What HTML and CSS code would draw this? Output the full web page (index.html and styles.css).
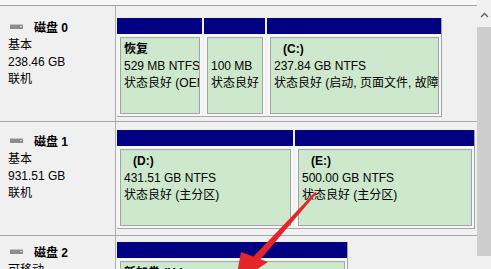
FILE: index.html
```html
<!DOCTYPE html>
<html lang="zh-CN">
<head>
    <meta charset="UTF-8">
    <title>磁盘管理</title>
    <link rel="stylesheet" href="styles.css">
</head>
<body>
<div class="screen">
    <div class="volumes">
        <div class="top-strip"></div>

        <div class="disk disk-0">
            <div class="disk-info">
                <div class="disk-name">
                    <svg class="disk-icon" width="13" height="5" viewBox="0 0 13 5">
                        <rect x="0" y="0" width="13" height="5" fill="#8c8c8c"/>
                        <rect x="0" y="0" width="13" height="1" fill="#c4c4c4"/>
                        <rect x="10" y="2" width="2" height="1" fill="#d8d8d8"/>
                    </svg>
                    <b>磁盘 0</b>
                </div>
                <div>基本</div>
                <div>238.46 GB</div>
                <div>联机</div>
            </div>
            <div class="parts">
                <div class="part w-recovery">
                    <div class="part-head"></div>
                    <div class="part-body">
                        <div class="part-box">
                            <div class="part-title">恢复</div>
                            <div>529 MB NTFS</div>
                            <div>状态良好 (OEM 分区)</div>
                        </div>
                    </div>
                </div>
                <div class="part w-efi">
                    <div class="part-head"></div>
                    <div class="part-body">
                        <div class="part-box">
                            <div class="part-title"></div>
                            <div>100 MB</div>
                            <div>状态良好 (EFI 系统分区)</div>
                        </div>
                    </div>
                </div>
                <div class="part w-c">
                    <div class="part-head"></div>
                    <div class="part-body">
                        <div class="part-box">
                            <div class="part-title drive">(C:)</div>
                            <div>237.84 GB NTFS</div>
                            <div>状态良好 (启动, 页面文件, 故障转储, 主分区)</div>
                        </div>
                    </div>
                </div>
            </div>
        </div>

        <div class="disk disk-1">
            <div class="disk-info">
                <div class="disk-name">
                    <svg class="disk-icon" width="13" height="5" viewBox="0 0 13 5">
                        <rect x="0" y="0" width="13" height="5" fill="#8c8c8c"/>
                        <rect x="0" y="0" width="13" height="1" fill="#c4c4c4"/>
                        <rect x="10" y="2" width="2" height="1" fill="#d8d8d8"/>
                    </svg>
                    <b>磁盘 1</b>
                </div>
                <div>基本</div>
                <div>931.51 GB</div>
                <div>联机</div>
            </div>
            <div class="parts">
                <div class="part w-d">
                    <div class="part-head"></div>
                    <div class="part-body">
                        <div class="part-box">
                            <div class="part-title drive">(D:)</div>
                            <div>431.51 GB NTFS</div>
                            <div>状态良好 (主分区)</div>
                        </div>
                    </div>
                </div>
                <div class="part w-e">
                    <div class="part-head"></div>
                    <div class="part-body">
                        <div class="part-box">
                            <div class="part-title drive">(E:)</div>
                            <div>500.00 GB NTFS</div>
                            <div>状态良好 (主分区)</div>
                        </div>
                    </div>
                </div>
            </div>
        </div>

        <div class="disk disk-2">
            <div class="disk-info">
                <div class="disk-name">
                    <svg class="disk-icon" width="13" height="5" viewBox="0 0 13 5">
                        <rect x="0" y="0" width="13" height="5" fill="#8c8c8c"/>
                        <rect x="0" y="0" width="13" height="1" fill="#c4c4c4"/>
                        <rect x="10" y="2" width="2" height="1" fill="#d8d8d8"/>
                    </svg>
                    <b>磁盘 2</b>
                </div>
                <div>可移动</div>
                <div>14.84 GB</div>
                <div>联机</div>
            </div>
            <div class="parts">
                <div class="part w-h">
                    <div class="part-head"></div>
                    <div class="part-body">
                        <div class="part-box">
                            <div class="part-title">新加卷 (H:)</div>
                            <div>14.84 GB FAT32</div>
                            <div>状态良好 (主分区)</div>
                        </div>
                    </div>
                </div>
            </div>
        </div>
    </div>

    <div class="scrollbar">
        <div class="scroll-up">
            <svg width="9" height="6" viewBox="0 0 9 6">
                <path d="M1 5 L4.5 1.5 L8 5" fill="none" stroke="#606060" stroke-width="1.4"/>
            </svg>
        </div>
        <div class="scroll-thumb"></div>
    </div>

    <!-- 红色箭头标注 -->
    <svg class="pointer" width="491" height="269" viewBox="0 0 491 269">
        <polygon points="315,192 317,193 259,261 253,257" fill="#e3262a"/>
        <polygon points="241,252 268,262 235,284" fill="#e3262a"/>
    </svg>
</div>
</body>
</html>
```

FILE: styles.css
```css
body {
    margin: 0;
    background: #f0f0f0;
    font-family: "Liberation Sans", "Noto Sans CJK SC", sans-serif;
    font-size: 12px;
    color: #000;
}
.screen {
    position: relative;
    width: 491px;
    height: 269px;
    overflow: hidden;
    display: flex;
}
.volumes {
    width: 477px;
    flex: none;
}
.top-strip {
    height: 5px;
    background: #f7f7f7;
    border-bottom: 1px solid #a0a0a0;
}
.disk {
    display: flex;
    border-bottom: 1px solid #a8a8a8;
    line-height: 17px;
}
.disk-0 {
    height: 115px;
}
.disk-1 {
    height: 113px;
}
.disk-2 {
    height: 120px;
}
.disk-info {
    width: 107px;
    padding-left: 8px;
    border-right: 1px solid #b0b0b0;
    flex: none;
}
.disk-0 .disk-info {
    padding-top: 14px;
}
.disk-1 .disk-info {
    padding-top: 12px;
}
.disk-2 .disk-info {
    padding-top: 9px;
}
.disk-name {
    display: flex;
    align-items: center;
}
.disk-name b {
    margin-left: 11px;
}
.disk-icon {
    margin-left: 2px;
    margin-top: -4px;
}
.parts {
    display: flex;
    gap: 2px;
    margin-left: 1px;
    align-self: flex-start;
    border-right: 1px solid #a0a0a0;
    border-bottom: 1px solid #a8a8a8;
}
.disk-0 .parts {
    margin-top: 12px;
}
.disk-1 .parts {
    margin-top: 8px;
}
.disk-2 .parts {
    margin-top: 6px;
}
.part {
    flex: none;
    background: #f7f7f7;
}
.w-recovery { width: 85px; }
.w-efi { width: 61px; }
.w-c { width: 174px; }
.w-d { width: 176px; }
.w-e { width: 179px; }
.w-h { width: 230px; }
.part-head {
    height: 16px;
    background: #000080;
}
.part-body {
    padding: 3px 2px 2px 3px;
}
.part-box {
    height: 75px;
    border: 1px solid #a4a4a4;
    background: #cde8cd;
    padding: 3px 0 0 3px;
    box-sizing: border-box;
    height: 77px;
    overflow: hidden;
    white-space: nowrap;
}
.part-title {
    font-weight: bold;
    height: 17px;
}
.part-title.drive {
    padding-left: 9px;
}
.scrollbar {
    width: 14px;
    flex: none;
    background: #f0f0f0;
}
.scroll-up {
    height: 27px;
    display: flex;
    justify-content: center;
    padding-top: 12px;
    box-sizing: border-box;
}
.scroll-thumb {
    height: 229px;
    background: #cdcdcd;
}
.pointer {
    position: absolute;
    top: 0;
    left: 0;
    pointer-events: none;
}
```
